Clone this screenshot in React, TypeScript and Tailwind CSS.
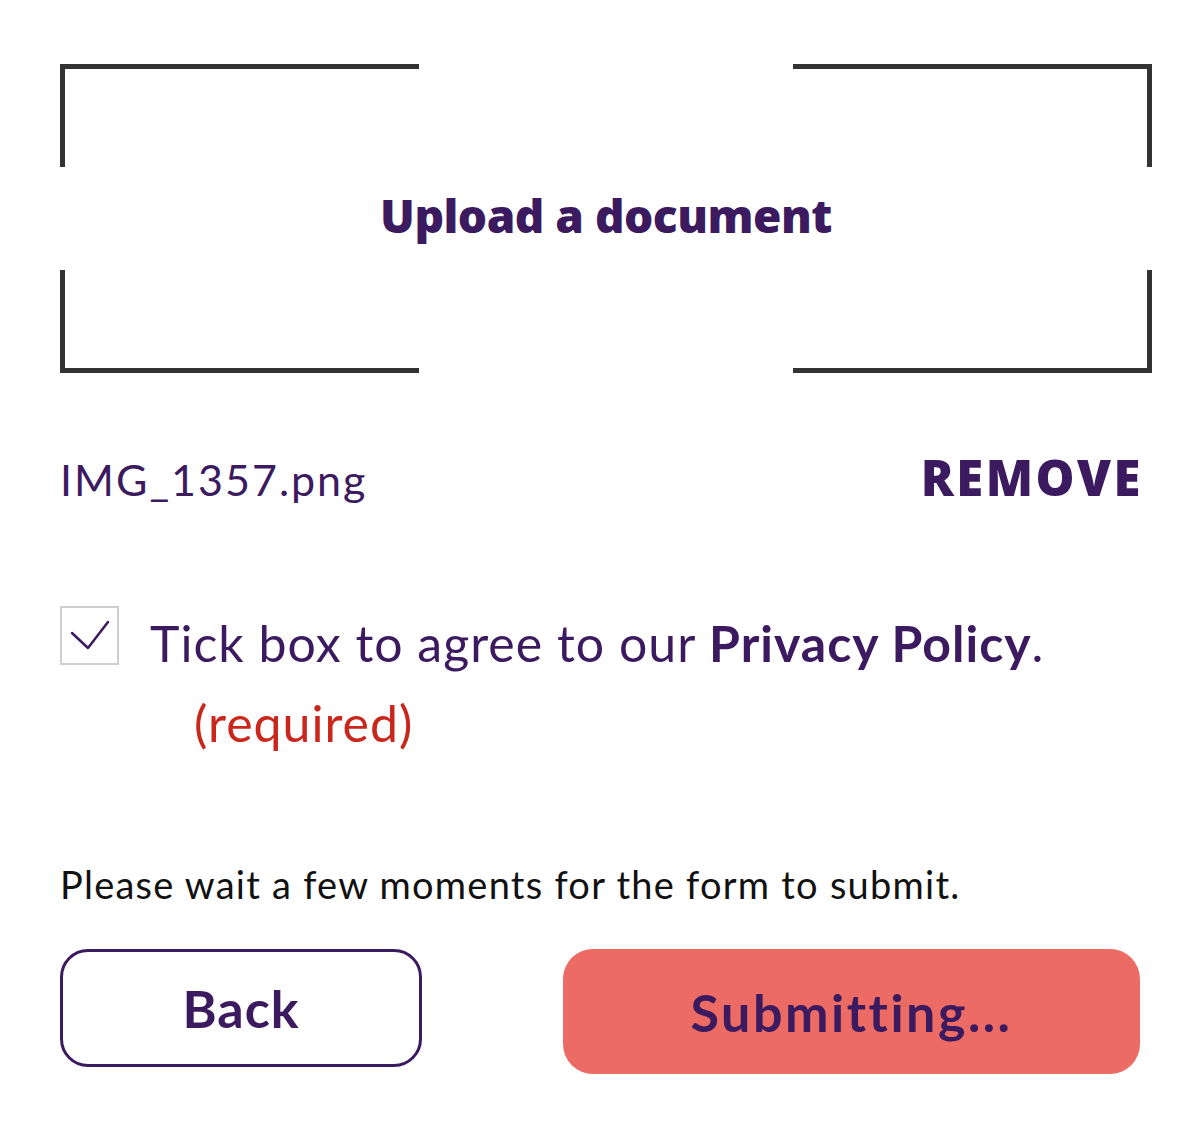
import React from 'react';

const purple = 'text-[#3b1a5f]';

// One bracket of the drop zone frame
const Corner: React.FC<{ className: string }> = ({ className }) => (
  <div className={`w-[359px] h-[103px] border-[#333333] ${className}`} />
);

const App: React.FC = () => {
  return (
    <div className="min-h-screen bg-white font-['Lato',sans-serif] pl-[60px] pt-[64px]">
      {/* Upload drop zone */}
      <div className="w-[1092px] h-[309px] flex flex-col justify-between">
        <div className="flex justify-between">
          <Corner className="border-t-[5px] border-l-[5px]" />
          <Corner className="border-t-[5px] border-r-[5px]" />
        </div>
        <div
          className={`mb-[8px] text-center font-['Open_Sans',sans-serif] text-[46px] font-extrabold leading-none tracking-[-0.5px] ${purple}`}
        >
          Upload a document
        </div>
        <div className="flex justify-between">
          <Corner className="border-b-[5px] border-l-[5px]" />
          <Corner className="border-b-[5px] border-r-[5px]" />
        </div>
      </div>

      {/* Selected file */}
      <div className="w-[1080px] mt-[80px] flex justify-between items-baseline">
        <span className={`text-[43px] leading-none tracking-[2px] ${purple}`}>IMG_1357.png</span>
        <button
          className={`-mr-[3px] font-['Open_Sans',sans-serif] text-[49px] font-extrabold leading-none tracking-[2.5px] ${purple}`}
        >
          REMOVE
        </button>
      </div>

      {/* Privacy consent */}
      <div className="mt-[101px] flex items-start">
        <div className="mt-[3px] w-[59px] h-[59px] border-2 border-[#cfcfcf] shrink-0">
          <svg width="55" height="55" viewBox="0 0 55 55">
            <polyline
              points="10,25 26,40 46,14"
              fill="none"
              stroke="#3b1a5f"
              strokeWidth="2.5"
              strokeLinecap="round"
              strokeLinejoin="round"
            />
          </svg>
        </div>
        <div className={`ml-[31px] text-[50px] leading-[80px] tracking-[1px] ${purple}`}>
          <div>
            Tick box to agree to our <span className="font-bold">Privacy Policy</span>.
          </div>
          <div className="ml-[44px] text-[#c9271c]">(required)</div>
        </div>
      </div>

      <p className="mt-[102px] text-[38px] leading-none tracking-[1.25px] text-[#111111]">
        Please wait a few moments for the form to submit.
      </p>

      {/* Actions */}
      <div className="w-[1080px] mt-[46px] flex justify-between items-start">
        <button
          className={`w-[362px] h-[118px] rounded-[28px] border-[3px] border-[#3b1a5f] text-[52px] font-bold tracking-[1px] ${purple}`}
        >
          Back
        </button>
        <button
          className={`w-[577px] h-[125px] rounded-[30px] bg-[#ec6b64] text-[52px] font-bold tracking-[2.5px] ${purple}`}
        >
          Submitting...
        </button>
      </div>
    </div>
  );
};

export default App;
